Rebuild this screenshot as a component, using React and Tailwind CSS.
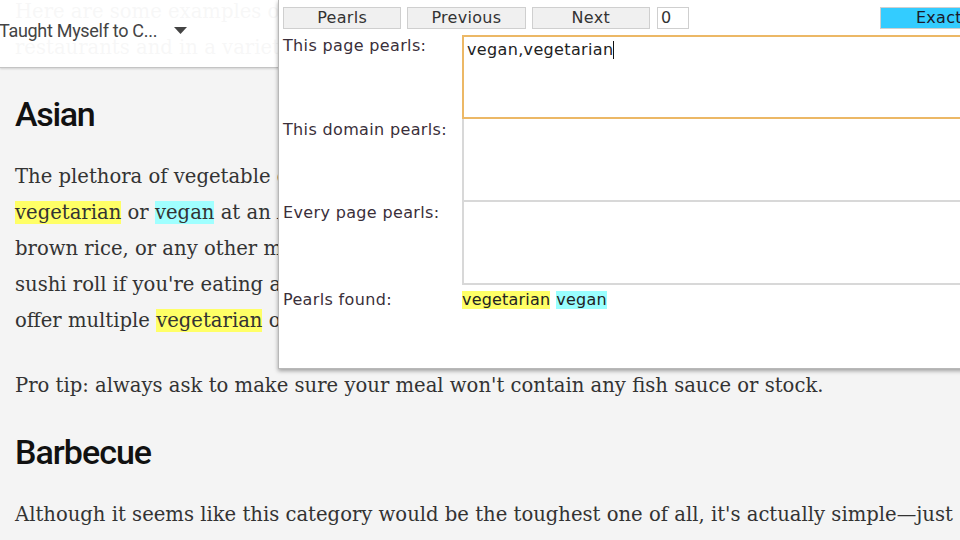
import React from 'react';

const Hl = ({ color, children }) => (
    <span className={color === 'yellow' ? 'bg-[#ffff66]' : 'bg-[#a0ffff]'}>{children}</span>
);

function Article() {
    return (
        <article className="pl-[15px] -mt-[6px] font-['DejaVu_Serif',serif] text-[19.6px] leading-[36px] text-[#333]">
            <div className="mb-[28px] whitespace-nowrap">
                <div>Here are some examples of dishes you can order at popular types of</div>
                <div>restaurants and in a variety of situations.</div>
            </div>
            <h2 className="mb-[25px] font-['Roboto',sans-serif] font-medium text-[34px] leading-[40px] tracking-[-1.3px] text-[#111]">Asian</h2>
            <div className="mb-[29px] whitespace-nowrap">
                <div>The plethora of vegetable dishes available makes it easy to eat</div>
                <div><Hl color="yellow">vegetarian</Hl> or <Hl color="cyan">vegan</Hl> at an Asian restaurant. Order tofu with veggies and</div>
                <div>brown rice, or any other meat-free stir-fry dish. Go for a veggie</div>
                <div>sushi roll if you're eating at a Japanese place. Most Indian restaurants</div>
                <div>offer multiple <Hl color="yellow">vegetarian</Hl> options as well.</div>
            </div>
            <p className="mb-[28px] whitespace-nowrap">Pro tip: always ask to make sure your meal won't contain any fish sauce or stock.</p>
            <h2 className="mb-[25px] font-['Roboto',sans-serif] font-medium text-[34px] leading-[40px] tracking-[-1px] text-[#111]">Barbecue</h2>
            <p className="whitespace-nowrap">Although it seems like this category would be the toughest one of all, it's actually simple—just</p>
        </article>
    );
}

function Header() {
    return (
        <header className="absolute top-0 left-0 w-[960px] h-[68px] bg-white/[0.96] border-b border-[#c4c4c4] shadow-[0_1px_2px_rgba(0,0,0,0.15)] flex items-center">
            <span className="font-['Roboto',sans-serif] text-[18px] tracking-[-0.3px] text-[#444] whitespace-nowrap -ml-[1px] -mt-[6px]">Taught Myself to C...</span>
            <svg width="13" height="7" viewBox="0 0 13 7" className="ml-[17px] -mt-[6px]">
                <path d="M0 0 L13 0 L6.5 7 Z" fill="#444" />
            </svg>
        </header>
    );
}

function PearlPanel() {
    const btn = "h-[22px] w-[119px] border border-[#cfcfcf] text-[16px] leading-[20px] tracking-[0.3px] text-center";
    const label = "pl-[4px] pt-[2px] text-[16px] leading-[18px] tracking-[0.35px] text-[#3a2f3a]";
    return (
        <div className="absolute top-0 left-[278px] w-[720px] h-[369px] bg-white border-l border-b border-[#b8b8b8] shadow-[0_2px_4px_rgba(0,0,0,0.35)] font-['DejaVu_Sans',sans-serif]">
            <div className="flex pt-[7px] pl-[4px]">
                <div className={`${btn} bg-[#f0f0f0] text-[#333]`}>Pearls</div>
                <div className={`${btn} ml-[6px] bg-[#f0f0f0] text-[#333]`}>Previous</div>
                <div className={`${btn} ml-[6px] bg-[#f0f0f0] text-[#333]`}>Next</div>
                <div className="h-[22px] w-[32px] ml-[7px] bg-white border border-[#cfcfcf] text-[16px] leading-[20px] pl-[3px] text-[#333]">0</div>
                <div className={`${btn} ml-[191px] bg-[#33ccff] text-[#1a1a2a]`}>Exact</div>
            </div>
            <div className="grid grid-cols-[183px_1fr] mt-[6px]">
                <div className={label}>This page pearls:</div>
                <div className="h-[84px] border-2 border-[#ecb866] pl-[3px] pt-[4px] text-[16px] leading-[18px] tracking-[0.35px] text-[#222] flex items-start">
                    <span>vegan,vegetarian</span>
                    <span className="w-px h-[18px] bg-[#111]"></span>
                </div>
                <div className={label}>This domain pearls:</div>
                <div className="h-[83px] border-2 border-t-0 border-[#d8d8d8]"></div>
                <div className={label}>Every page pearls:</div>
                <div className="h-[83px] border-2 border-t-0 border-[#d8d8d8]"></div>
                <div className="pl-[4px] mt-[6px] text-[16px] leading-[18px] tracking-[0.35px] text-[#3a2f3a]">Pearls found:</div>
                <div className="mt-[6px] text-[16px] leading-[18px] tracking-[0.2px] text-[#222] flex gap-[6px]">
                    <span className="bg-[#ffff66]">vegetarian</span>
                    <span className="bg-[#99ffff]">vegan</span>
                </div>
            </div>
        </div>
    );
}

export default function App() {
    return (
        <div className="relative w-[960px] h-[540px] overflow-hidden bg-[#f4f4f4]">
            <Article />
            <Header />
            <PearlPanel />
        </div>
    );
}
